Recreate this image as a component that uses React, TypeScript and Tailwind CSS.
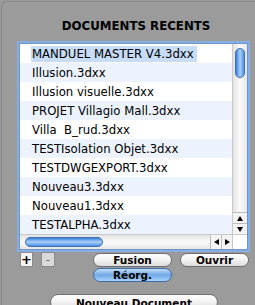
import React from "react";

const files = [
  "MANDUEL MASTER V4.3dxx",
  "Illusion.3dxx",
  "Illusion visuelle.3dxx",
  "PROJET Villagio Mall.3dxx",
  "Villa  B_rud.3dxx",
  "TESTIsolation Objet.3dxx",
  "TESTDWGEXPORT.3dxx",
  "Nouveau3.3dxx",
  "Nouveau1.3dxx",
  "TESTALPHA.3dxx",
];

const font = { fontFamily: '"DejaVu Sans", "Lucida Grande", sans-serif' };

function Btn({ label, blue, className }: { label: string; blue?: boolean; className?: string }) {
  return (
    <div
      className={
        "flex items-center justify-center rounded-full border text-[10.5px] font-bold text-black leading-none " +
        (blue
          ? "border-[#3d6ca8] bg-gradient-to-b from-[#c3ddf7] via-[#6ea8e6] to-[#a9d3fb] "
          : "border-[#6e6e6e] bg-gradient-to-b from-[#ffffff] via-[#f2f2f2] to-[#dcdcdc] ") +
        (className || "")
      }
    >
      {label}
    </div>
  );
}

export default function App() {
  return (
    <div className="w-[255px] h-[305px] bg-[#9b9b9b] overflow-hidden" style={font}>
      <div className="ml-[1px] mt-[1px] h-[320px] rounded-tl-[6px] border-l border-t border-[#878787] flex flex-col">
        <div className="pt-[17px] text-center text-[11.8px] font-bold text-black leading-[15px] pl-[15px]">
          DOCUMENTS RECENTS
        </div>
        <div className="ml-[17px] mt-[9px] w-[229px] h-[207px] shrink-0 border border-[#6f96c7] shadow-[0_0_0_2px_#86aee0] bg-white flex flex-col">
          <div className="flex h-[190px]">
            <div className="flex-1 overflow-hidden">
              {files.map((f, i) => (
                <div
                  key={f}
                  className={"h-[19px] flex items-center pl-[11px] text-[11.7px] text-black whitespace-pre " + (i % 2 === 1 ? "bg-[#edf3fe]" : "bg-white")}
                >
                  <span className={i === 0 ? "bg-[#c6dcf7] pl-[1px] pr-[3px] leading-[16px]" : "pl-[1px] leading-[16px]"}>{f}</span>
                </div>
              ))}
            </div>
            <div className="w-[15px] border-l border-[#c9c9c9] bg-gradient-to-r from-[#e2e2e2] via-[#fafafa] to-[#e6e6e6] flex flex-col">
              <div className="mt-[4px] mx-auto w-[10px] h-[30px] rounded-full border border-[#3a6fb5] bg-gradient-to-r from-[#3b7fd6] via-[#a9d0fa] to-[#4d8fe0]" />
              <div className="flex-1" />
              <div className="h-[11px] bg-[#f4f4f4] border-t border-[#bdbdbd] flex items-center justify-center">
                <div className="w-0 h-0 border-l-[3px] border-r-[3px] border-b-[5px] border-l-transparent border-r-transparent border-b-black" />
              </div>
              <div className="h-[11px] bg-[#f4f4f4] border-t border-[#bdbdbd] flex items-center justify-center">
                <div className="w-0 h-0 border-l-[3px] border-r-[3px] border-t-[5px] border-l-transparent border-r-transparent border-t-black" />
              </div>
            </div>
          </div>
          <div className="h-[15px] flex border-t border-[#c9c9c9]">
            <div className="flex-1 bg-gradient-to-b from-[#e2e2e2] via-[#fafafa] to-[#e6e6e6] flex items-center">
              <div className="ml-[5px] w-[78px] h-[10px] rounded-full border border-[#3a6fb5] bg-gradient-to-b from-[#3b7fd6] via-[#a9d0fa] to-[#4d8fe0]" />
            </div>
            <div className="w-[11px] bg-[#f4f4f4] border-l border-[#bdbdbd] flex items-center justify-center">
              <div className="w-0 h-0 border-t-[3px] border-b-[3px] border-r-[5px] border-t-transparent border-b-transparent border-r-black" />
            </div>
            <div className="w-[11px] bg-[#f4f4f4] border-l border-[#bdbdbd] flex items-center justify-center">
              <div className="w-0 h-0 border-t-[3px] border-b-[3px] border-l-[5px] border-t-transparent border-b-transparent border-l-black" />
            </div>
            <div className="w-[15px] bg-white border-l border-[#c9c9c9]" />
          </div>
        </div>
        <div className="flex mt-[2px] ml-[18px] shrink-0">
          <div className="flex gap-[8px] items-start">
            <div className="w-[13px] h-[15px] bg-[#f3f3f3] border border-[#8a8a8a] flex items-center justify-center text-[13px] font-bold leading-none">+</div>
            <div className="w-[14px] h-[15px] bg-[#d9d9d9] border border-[#8a8a8a] flex items-center justify-center text-[11px] text-[#555] leading-none">-</div>
          </div>
          <div className="ml-[38px] mt-[1px] flex flex-col gap-[1px]">
            <Btn label="Fusion" className="w-[79px] h-[14px]" />
            <Btn label="Réorg." blue className="w-[79px] h-[14px]" />
          </div>
          <Btn label="Ouvrir" className="ml-[8px] mt-[1px] w-[69px] h-[14px]" />
        </div>
        <div className="ml-[48px] mt-[12px] shrink-0">
          <Btn label="Nouveau Document" className="w-[168px] h-[16px] items-end pb-[1px]" />
        </div>
      </div>
    </div>
  );
}
